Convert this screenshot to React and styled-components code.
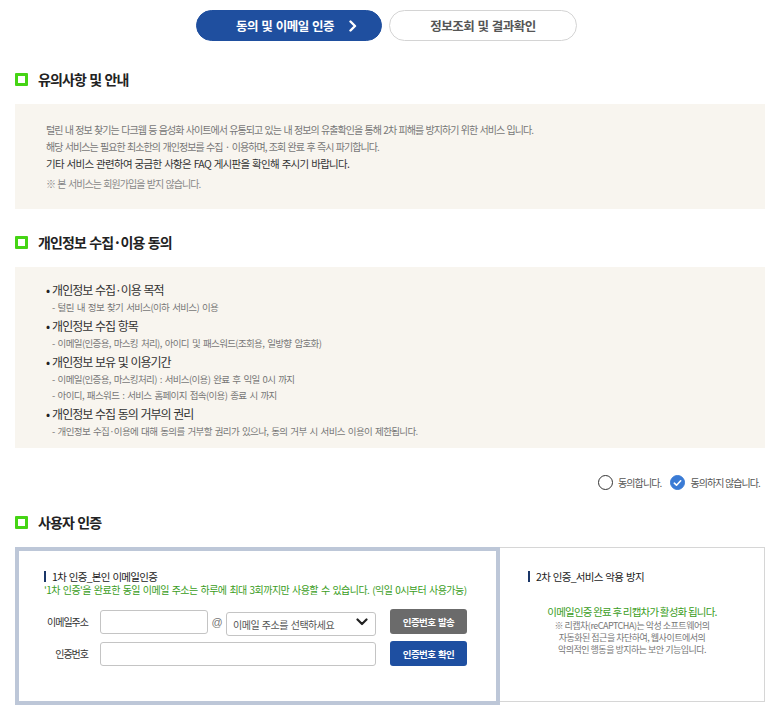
import React, { useState } from 'react';
import styled, { createGlobalStyle } from 'styled-components';

const GlobalStyle = createGlobalStyle`
    body {
        margin: 0;
        background: #fff;
        font-family: "Noto Sans CJK KR", "Noto Sans", sans-serif;
        color: #333;
    }
    * { box-sizing: border-box; }
`;

const notices = [
    { text: '털린 내 정보 찾기는 다크웹 등 음성화 사이트에서 유통되고 있는 내 정보의 유출확인을 통해 2차 피해를 방지하기 위한 서비스 입니다.', tone: 'light' },
    { text: '해당 서비스는 필요한 최소한의 개인정보를 수집 · 이용하며, 조회 완료 후 즉시 파기합니다.', tone: 'light' },
    { text: '기타 서비스 관련하여 궁금한 사항은 FAQ 게시판을 확인해 주시기 바랍니다.', tone: 'dark' },
];

const privacyItems = [
    { title: '개인정보 수집·이용 목적', subs: ['- 털린 내 정보 찾기 서비스(이하 서비스) 이용'] },
    { title: '개인정보 수집 항목', subs: ['- 이메일(인증용, 마스킹 처리), 아이디 및 패스워드(조회용, 일방향 암호화)'] },
    { title: '개인정보 보유 및 이용기간', subs: ['- 이메일(인증용, 마스킹처리) : 서비스(이용) 완료 후 익일 0시 까지', '- 아이디, 패스워드 : 서비스 홈페이지 접속(이용) 종료 시 까지'] },
    { title: '개인정보 수집 동의 거부의 권리', subs: ['- 개인정보 수집·이용에 대해 동의를 거부할 권리가 있으나, 동의 거부 시 서비스 이용이 제한됩니다.'] },
];

export default function App() {
    const [agree, setAgree] = useState(false);

    return (
        <Page>
            <GlobalStyle />
            <Tabs>
                <Tab $active>
                    <span>동의 및 이메일 인증</span>
                    <svg width="10" height="12" viewBox="0 0 10 12">
                        <path d="M2.5 1.5 L7 6 L2.5 10.5" fill="none" stroke="#fff" strokeWidth="2.4" strokeLinecap="round" strokeLinejoin="round" />
                    </svg>
                </Tab>
                <Tab>정보조회 및 결과확인</Tab>
            </Tabs>

            <SectionTitle $top={28}><Square />유의사항 및 안내</SectionTitle>
            <InfoBox>
                {notices.map(n => <NoticeLine key={n.text} $tone={n.tone}>{n.text}</NoticeLine>)}
                <NoticeLine $tone="note" $gap={3}>※ 본 서비스는 회원가입을 받지 않습니다.</NoticeLine>
            </InfoBox>

            <SectionTitle $top={23}><Square />개인정보 수집·이용 동의</SectionTitle>
            <PrivacyBox>
                {privacyItems.map(item => (
                    <Item key={item.title}>
                        <ItemTitle>{item.title}</ItemTitle>
                        {item.subs.map(s => <ItemSub key={s}>{s}</ItemSub>)}
                    </Item>
                ))}
            </PrivacyBox>

            <AgreeRow>
                <Radio onClick={() => setAgree(true)}>
                    <RadioDot $checked={agree}>
                        {agree && <Check />}
                    </RadioDot>
                    동의합니다.
                </Radio>
                <Radio onClick={() => setAgree(false)}>
                    <RadioDot $checked={!agree}>
                        {!agree && <Check />}
                    </RadioDot>
                    동의하지 않습니다.
                </Radio>
            </AgreeRow>

            <SectionTitle $top={22}><Square />사용자 인증</SectionTitle>
            <AuthGrid>
                <FirstPanel>
                    <PanelTitle>1차 인증_본인 이메일인증</PanelTitle>
                    <GreenNote>'1차 인증'을 완료한 동일 이메일 주소는 하루에 최대 3회까지만 사용할 수 있습니다. (익일 0시부터 사용가능)</GreenNote>
                    <FormRows>
                        <FormRow>
                            <Label>이메일주소</Label>
                            <Input $w={108} />
                            <At>@</At>
                            <SelectWrap>
                                <Select defaultValue="">
                                    <option value="">이메일 주소를 선택하세요</option>
                                    <option>naver.com</option>
                                    <option>gmail.com</option>
                                </Select>
                                <svg width="12" height="8" viewBox="0 0 12 8">
                                    <path d="M1.5 1.5 L6 6 L10.5 1.5" fill="none" stroke="#222" strokeWidth="2.2" strokeLinecap="round" strokeLinejoin="round" />
                                </svg>
                            </SelectWrap>
                            <Button $tone="gray" $ml={14}>인증번호 발송</Button>
                        </FormRow>
                        <FormRow>
                            <Label>인증번호</Label>
                            <Input $w={276} />
                            <Button $tone="blue" $ml={14}>인증번호 확인</Button>
                        </FormRow>
                    </FormRows>
                </FirstPanel>
                <SecondPanel>
                    <PanelTitle>2차 인증_서비스 악용 방지</PanelTitle>
                    <Captcha>
                        <CaptchaGreen>이메일인증 완료 후 리캡차가 활성화 됩니다.</CaptchaGreen>
                        <CaptchaGray>
                            ※ 리캡차(reCAPTCHA)는 악성 소프트웨어의<br />
                            자동화된 접근을 차단하여, 웹사이트에서의<br />
                            악의적인 행동을 방지하는 보안 기능입니다.
                        </CaptchaGray>
                    </Captcha>
                </SecondPanel>
            </AuthGrid>
        </Page>
    );
}

function Check() {
    return (
        <svg width="9" height="8" viewBox="0 0 9 8">
            <path d="M1.3 4.2 L3.5 6.2 L7.7 1.8" fill="none" stroke="#fff" strokeWidth="1.6" strokeLinecap="round" strokeLinejoin="round" />
        </svg>
    );
}

const Page = styled.div`
    width: 778px;
    padding: 10px 13px 10px 15px;
`;

const Tabs = styled.div`
    display: flex;
    justify-content: center;
    gap: 7px;
    padding-right: 7px;
`;

const Tab = styled.div`
    width: ${p => p.$active ? 186 : 188}px;
    height: 31px;
    border-radius: 16px;
    display: flex;
    align-items: center;
    justify-content: center;
    gap: 14px;
    font-size: 12.5px;
    font-weight: 700;
    letter-spacing: -0.5px;
    word-spacing: 1px;
    background: ${p => p.$active ? '#1f4f9f' : '#fff'};
    color: ${p => p.$active ? '#fff' : '#555'};
    border: 1px solid ${p => p.$active ? '#1f4f9f' : '#d4d4d4'};
    padding-left: ${p => p.$active ? 16 : 0}px;
`;

const SectionTitle = styled.h2`
    margin: ${p => p.$top}px 0 15px;
    height: 20px;
    display: flex;
    align-items: center;
    gap: 10px;
    font-size: 14px;
    font-weight: 700;
    letter-spacing: -0.9px;
    word-spacing: 1px;
    color: #222;
`;

const Square = styled.span`
    width: 13px;
    height: 13px;
    border: 3px solid #45d414;
    border-radius: 1px;
    flex: none;
`;

const InfoBox = styled.div`
    background: #f8f5ef;
    padding: 17px 31px 17px;
    display: flex;
    flex-direction: column;
`;

const NoticeLine = styled.p`
    margin: ${p => p.$gap || 0}px 0 0;
    line-height: 17px;
    font-size: ${p => p.$tone === 'dark' ? 10.5 : 10}px;
    letter-spacing: ${p => p.$tone === 'dark' ? -0.7 : -0.95}px;
    word-spacing: 1px;
    color: ${p => p.$tone === 'dark' ? '#333' : p.$tone === 'note' ? '#888' : '#777'};
`;

const PrivacyBox = styled.ul`
    margin: 0;
    list-style: none;
    background: #f8f5ef;
    padding: 14px 31px 9px;
    display: flex;
    flex-direction: column;
    gap: 2px;
`;

const Item = styled.li`
    display: flex;
    flex-direction: column;
`;

const ItemTitle = styled.div`
    line-height: 18px;
    font-size: 12px;
    letter-spacing: -1px;
    word-spacing: 1px;
    color: #333;
    &::before {
        content: '•';
        margin-right: 3px;
        color: #222;
    }
`;

const ItemSub = styled.div`
    line-height: 16px;
    padding-left: 6px;
    font-size: 9.5px;
    letter-spacing: -0.65px;
    word-spacing: 1.5px;
    color: #777;
`;

const AgreeRow = styled.div`
    margin-top: 27px;
    display: flex;
    justify-content: flex-end;
    gap: 9px;
    padding-right: 5px;
`;

const Radio = styled.label`
    display: flex;
    align-items: center;
    gap: 5px;
    font-size: 10px;
    letter-spacing: -0.9px;
    color: #555;
    cursor: pointer;
`;

const RadioDot = styled.span`
    width: 15px;
    height: 15px;
    border-radius: 50%;
    display: flex;
    align-items: center;
    justify-content: center;
    border: 1px solid ${p => p.$checked ? '#3a7bd5' : '#333'};
    background: ${p => p.$checked ? '#3a7bd5' : '#fff'};
`;

const AuthGrid = styled.div`
    display: grid;
    grid-template-columns: 485px 1fr;
    height: 158px;
`;

const FirstPanel = styled.div`
    border: 4px solid #bdc7d8;
    padding: 17px 10px 0 25px;
`;

const SecondPanel = styled.div`
    border: 1px solid #d6d6d6;
    border-left: none;
    height: 155px;
    padding: 20px 10px 0 28px;
`;

const PanelTitle = styled.div`
    display: flex;
    align-items: center;
    gap: 6px;
    height: 16px;
    font-size: 10.5px;
    letter-spacing: -0.7px;
    word-spacing: 1px;
    color: #222;
    &::before {
        content: '';
        width: 2px;
        height: 11px;
        background: #1a3668;
    }
`;

const GreenNote = styled.div`
    margin-top: -2px;
    line-height: 16px;
    font-size: 10px;
    letter-spacing: -0.55px;
    word-spacing: 1.2px;
    color: #3a9d23;
    white-space: nowrap;
`;

const FormRows = styled.div`
    margin-top: 11px;
    display: flex;
    flex-direction: column;
    gap: 7px;
`;

const FormRow = styled.div`
    display: flex;
    align-items: center;
`;

const Label = styled.div`
    width: 44px;
    margin-right: 12px;
    text-align: right;
    font-size: 10px;
    letter-spacing: -1px;
    color: #333;
`;

const Input = styled.input`
    width: ${p => p.$w}px;
    height: 24px;
    border: 1px solid #c4c4c4;
    border-radius: 3px;
    background: #fff;
    outline: none;
`;

const At = styled.span`
    width: 18px;
    text-align: center;
    font-family: "Liberation Sans", sans-serif;
    font-size: 11px;
    color: #777;
`;

const SelectWrap = styled.div`
    position: relative;
    width: 150px;
    height: 24px;
    svg {
        position: absolute;
        right: 8px;
        top: 8px;
        pointer-events: none;
    }
`;

const Select = styled.select`
    appearance: none;
    width: 100%;
    height: 100%;
    border: 1px solid #c4c4c4;
    border-radius: 3px;
    background: #fff;
    padding: 0 6px;
    font-family: inherit;
    font-size: 10px;
    letter-spacing: -0.5px;
    word-spacing: 1px;
    color: #555;
    outline: none;
`;

const Button = styled.button`
    margin-left: ${p => p.$ml}px;
    width: 77px;
    height: 25px;
    border: none;
    border-radius: 3px;
    background: ${p => p.$tone === 'blue' ? '#1e4fa1' : '#6b6b6b'};
    color: #fff;
    font-family: inherit;
    font-size: 9.5px;
    font-weight: 700;
    letter-spacing: -0.6px;
    word-spacing: 1px;
    cursor: pointer;
`;

const Captcha = styled.div`
    margin-top: 20px;
    display: flex;
    flex-direction: column;
    align-items: center;
    padding-right: 18px;
    text-align: center;
`;

const CaptchaGreen = styled.div`
    line-height: 16px;
    font-size: 10.5px;
    letter-spacing: -0.8px;
    color: #3a9d23;
`;

const CaptchaGray = styled.div`
    line-height: 12px;
    font-size: 9px;
    letter-spacing: -0.5px;
    color: #777;
`;
